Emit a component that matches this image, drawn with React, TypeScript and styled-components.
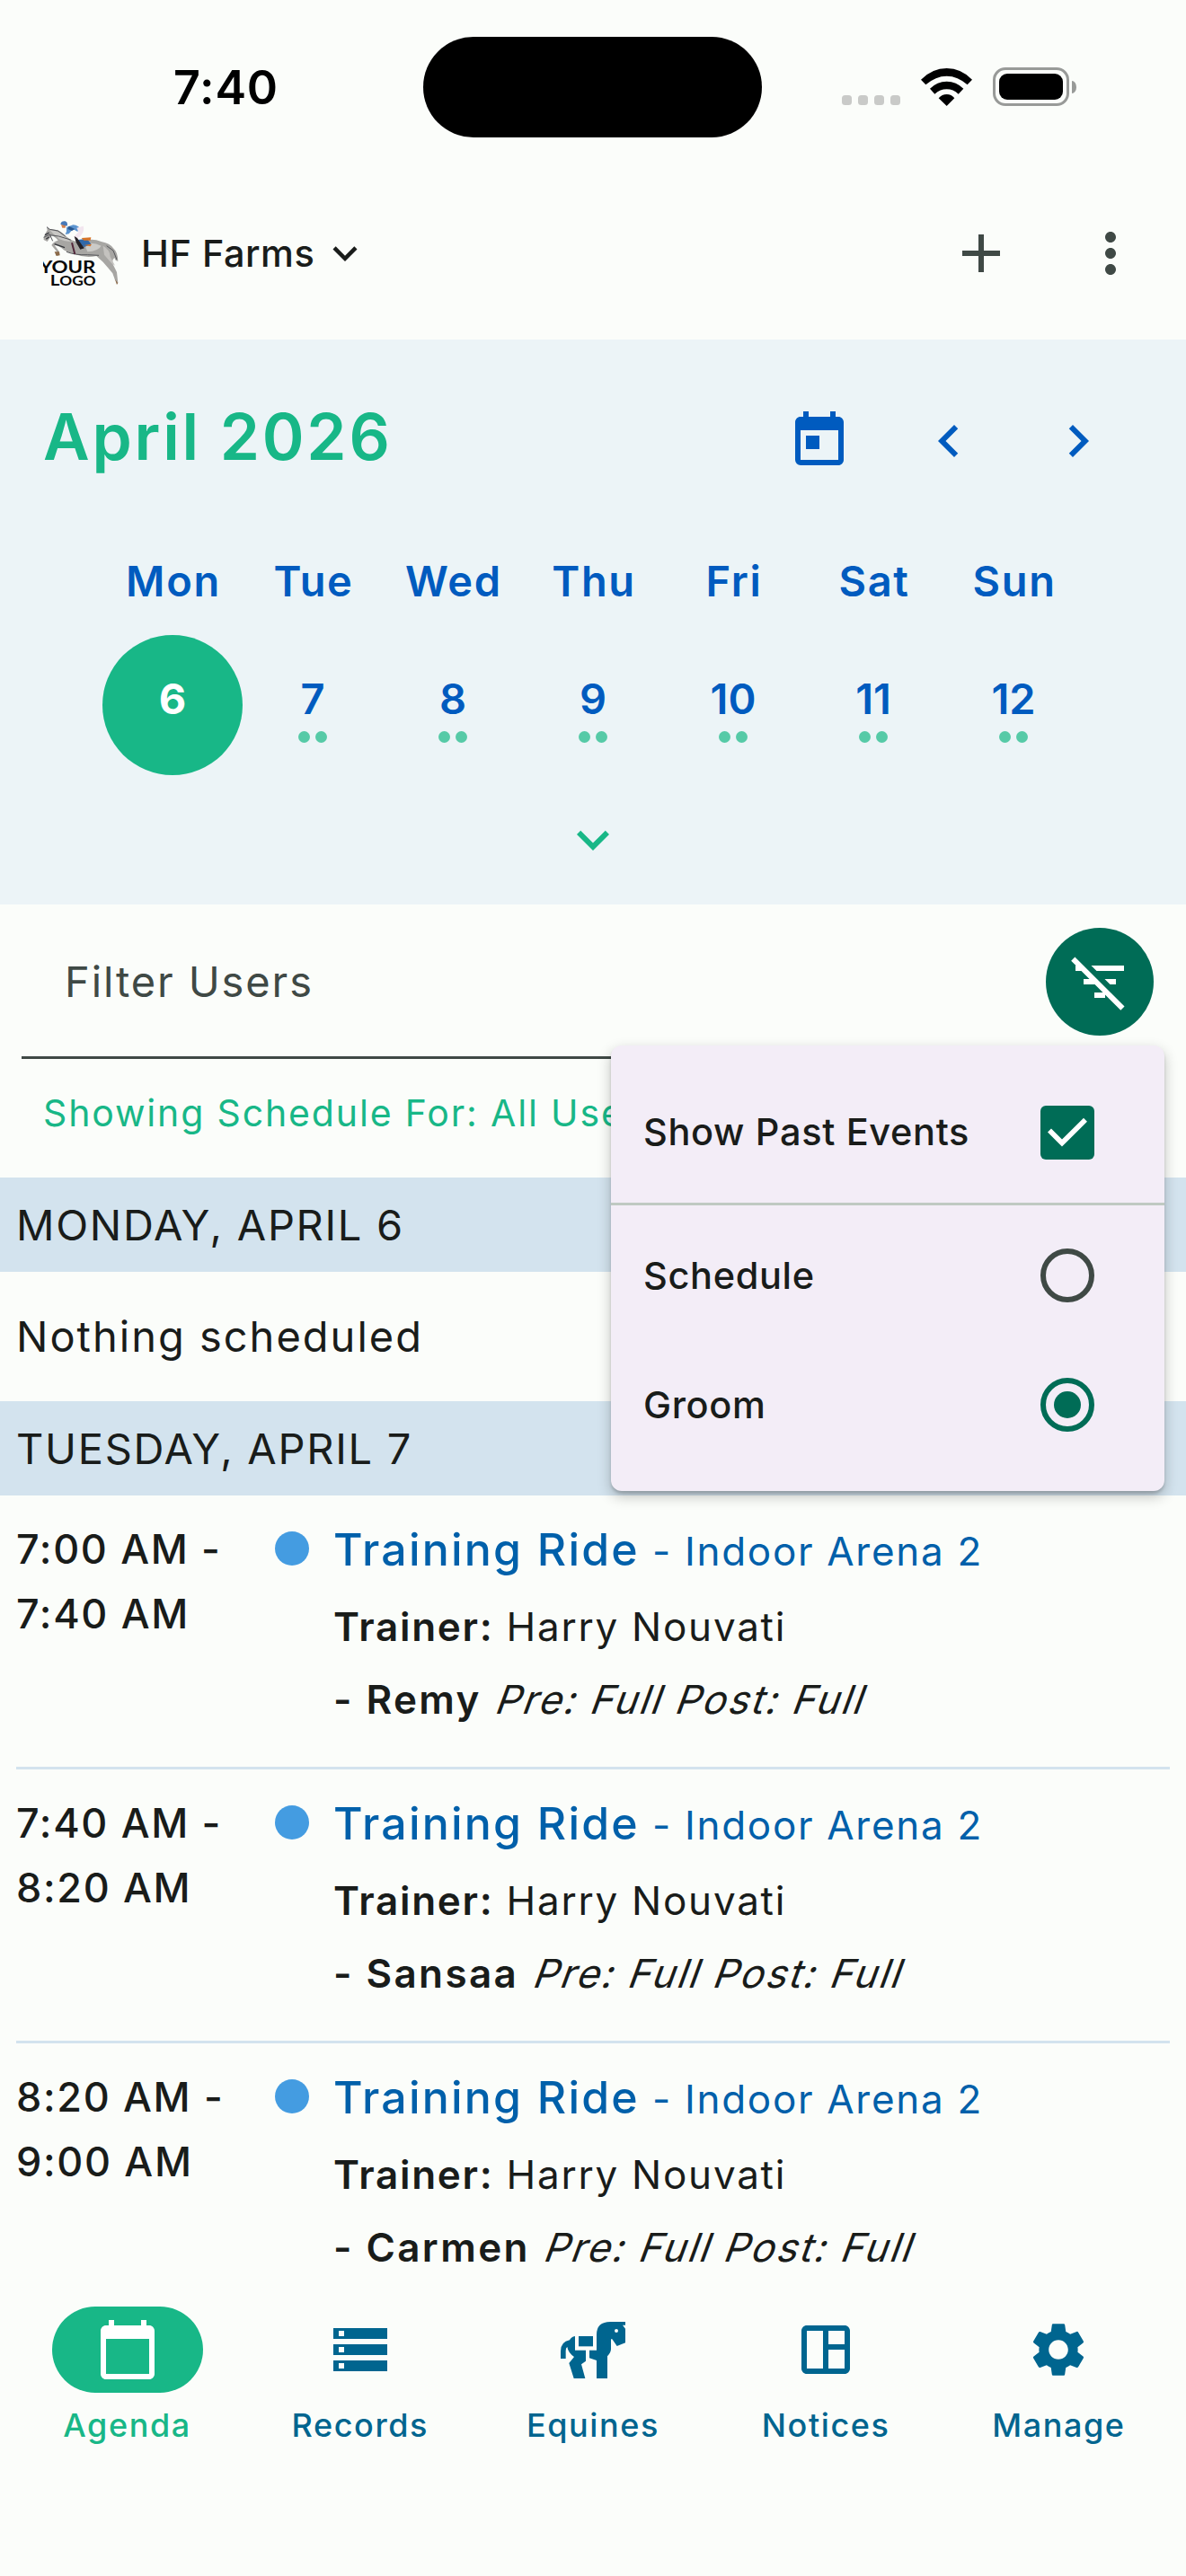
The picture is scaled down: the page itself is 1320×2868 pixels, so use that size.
import React from "react";
import styled, { createGlobalStyle } from "styled-components";
import {
  MdAdd,
  MdCalendarToday,
  MdChevronLeft,
  MdChevronRight,
  MdExpandMore,
  MdMoreVert,
  MdOutlineSpaceDashboard,
  MdSettings,
  MdStorage,
  MdToday,
} from "react-icons/md";

const color = {
  page: "#fbfdfa",
  ink: "#191c1a",
  muted: "#3f4945",
  green: "#18b787",
  teal: "#006c56",
  blue: "#005bbf",
  navBlue: "#00658f",
  eventBlue: "#0060aa",
  calendar: "#ecf4f7",
  band: "#d3e3ee",
  menu: "#f3edf7",
};

const GlobalStyle = createGlobalStyle`
  *, *::before, *::after { box-sizing: border-box; }
  body {
    margin: 0;
    background: ${color.page};
    color: ${color.ink};
    font-family: Inter, Roboto, "Liberation Sans", sans-serif;
    -webkit-font-smoothing: antialiased;
  }
  svg { display: block; flex: none; }
`;

const Screen = styled.div`
  position: relative;
  display: flex;
  flex-direction: column;
  width: 1320px;
  height: 2868px;
  overflow: hidden;
  background: ${color.page};
  white-space: nowrap;
`;

/* ---------- status bar ---------- */

const StatusBar = styled.header`
  display: grid;
  grid-template-columns: 471px 377px 1fr;
  height: 186px;
  padding-top: 41px;
  color: #000;
`;

const Clock = styled.div`
  padding-left: 193px;
  font-size: 52px;
  font-weight: 600;
  line-height: 114px;
  letter-spacing: 0.8px;
`;

const Island = styled.div`
  height: 112px;
  border-radius: 56px;
  background: #000;
`;

const StatusIcons = styled.div`
  display: flex;
  align-items: center;
  height: 111px;
  padding-left: 89px;
`;

const SignalDots = styled.div`
  display: flex;
  gap: 7px;
  margin-top: 30px;
  margin-right: 23px;
`;

const SignalDot = styled.span`
  width: 11px;
  height: 11px;
  border-radius: 3.5px;
  background: #c9cac8;
`;

const Battery = styled.div`
  width: 85px;
  height: 43px;
  margin-left: 23px;
  padding: 4px;
  border: 3px solid #989a98;
  border-radius: 14px;
`;

const BatteryFill = styled.div`
  height: 29px;
  border-radius: 9px;
  background: #000;
`;

const BatteryTip = styled.div`
  width: 5px;
  height: 14px;
  margin-left: 3px;
  border-radius: 0 5px 5px 0 / 0 7px 7px 0;
  background: #989a98;
`;

/* ---------- app bar ---------- */

const AppBar = styled.div`
  display: flex;
  align-items: center;
  height: 192px;
  padding: 0 48px;
`;

const FarmName = styled.div`
  width: 200px;
  margin: 0 0 0 25px;
  font-size: 41.5px;
  font-weight: 500;
  line-height: 60px;
  letter-spacing: 0.5px;
`;

const AppActions = styled.div`
  display: flex;
  gap: 72px;
  margin-left: auto;
  color: ${color.muted};
`;

/* ---------- calendar ---------- */

const Calendar = styled.section`
  height: 629px;
  background: ${color.calendar};
  color: ${color.blue};
`;

const MonthRow = styled.div`
  display: flex;
  align-items: center;
  justify-content: space-between;
  height: 226px;
  padding: 0 84px 0 48px;
`;

const MonthTitle = styled.h1`
  margin: 0 0 10px;
  color: ${color.green};
  font-size: 71px;
  font-weight: 600;
  line-height: 90px;
  letter-spacing: 2.8px;
`;

const MonthActions = styled.div`
  display: flex;
  gap: 72px;
`;

const Week = styled.div`
  display: grid;
  grid-template-columns: repeat(7, 156px);
  justify-content: center;
`;

const WeekdayName = styled.div`
  padding-left: 2px;
  font-size: 47px;
  font-weight: 600;
  line-height: 86px;
  letter-spacing: 1.7px;
  text-align: center;
`;

const DayCell = styled.div<{ $selected?: boolean }>`
  display: flex;
  flex-direction: column;
  align-items: center;
  height: 156px;
  margin-top: 17px;
  padding-top: 41px;
  border-radius: 50%;
  background: ${(p) => (p.$selected ? color.green : "transparent")};
  color: ${(p) => (p.$selected ? "#fff" : color.blue)};
  font-size: 47px;
  font-weight: ${(p) => (p.$selected ? 700 : 600)};
  line-height: 60px;
`;

const DayDots = styled.div`
  display: flex;
  gap: 6px;
  margin-top: 6px;
`;

const DayDot = styled.span`
  width: 13px;
  height: 13px;
  border-radius: 50%;
  background: #56caa7;
`;

const Expand = styled.div`
  display: flex;
  justify-content: center;
  margin-top: 36px;
  color: ${color.green};
`;

/* ---------- filter ---------- */

const FilterRow = styled.div`
  display: flex;
  align-items: center;
  justify-content: space-between;
  height: 172px;
  margin: 0 24px;
  padding: 0 12px 0 48px;
  border-bottom: 3px solid ${color.muted};
`;

const FilterLabel = styled.div`
  margin-top: 3px;
  color: ${color.muted};
  font-size: 47px;
  line-height: 60px;
  letter-spacing: 1.9px;
`;

const FilterButton = styled.button`
  display: flex;
  align-items: center;
  justify-content: center;
  width: 120px;
  height: 120px;
  margin-top: 3px;
  padding: 0;
  border: 0;
  border-radius: 50%;
  background: ${color.teal};
  color: #fff;
`;

const ShowingFor = styled.div`
  height: 132px;
  padding-left: 48px;
  color: ${color.green};
  font-size: 41px;
  line-height: 121px;
  letter-spacing: 1.85px;
`;

/* ---------- schedule ---------- */

const Schedule = styled.main`
  height: 1215px;
  overflow: hidden;
`;

const DateBand = styled.h2`
  height: 105px;
  margin: 0;
  padding-left: 18px;
  background: ${color.band};
  font-size: 47px;
  font-weight: 400;
  line-height: 106px;
  letter-spacing: 1.7px;
`;

const EmptyDay = styled.div`
  height: 144px;
  padding-left: 18px;
  font-size: 47px;
  line-height: 144px;
  letter-spacing: 2px;
`;

const EventRow = styled.article`
  display: grid;
  grid-template-columns: 288px 65px 1fr;
  height: 305px;
  margin: 0 18px;
  border-bottom: 3px solid ${color.band};
`;

const EventTime = styled.div`
  padding-top: 24px;
  font-size: 45px;
  font-weight: 500;
  line-height: 72px;
  letter-spacing: 1.65px;
`;

const EventDot = styled.span`
  width: 38px;
  height: 38px;
  margin: 40px 0 0;
  border-radius: 50%;
  background: #449ce1;
`;

const EventBody = styled.div`
  display: flex;
  flex-direction: column;
`;

const EventLine = styled.div<{ $top: number }>`
  display: flex;
  align-items: baseline;
  height: 60px;
  margin-top: ${(p) => p.$top}px;
  font-size: 44px;
  line-height: 60px;
  letter-spacing: 1.75px;
  white-space: pre;
`;

const EventTitle = styled.span`
  color: ${color.eventBlue};
  font-size: 50px;
  font-weight: 500;
  letter-spacing: 2.2px;
`;

const EventPlace = styled.span`
  color: ${color.eventBlue};
  letter-spacing: 1.7px;
`;

const RoleLabel = styled.span`
  font-weight: 600;
  letter-spacing: 1.7px;
`;

const HorseName = styled.span`
  font-weight: 600;
  letter-spacing: 2.4px;
`;

const Feed = styled.span`
  display: inline-block;
  letter-spacing: 2.15px;
  transform: skewX(-20deg);
  transform-origin: 0 46px;
`;

/* ---------- options menu ---------- */

const Menu = styled.div`
  position: absolute;
  top: 1164px;
  left: 680px;
  width: 616px;
  height: 496px;
  padding: 24px 0;
  border-radius: 12px;
  background: ${color.menu};
  box-shadow: 0 3px 3px rgba(0, 0, 0, 0.14), 0 6px 15px rgba(0, 0, 0, 0.24);
`;

const MenuItem = styled.div`
  display: flex;
  align-items: center;
  justify-content: space-between;
  height: 144px;
  padding: 0 78px 0 36px;
  font-size: 41.5px;
  font-weight: 500;
  line-height: 60px;
  letter-spacing: 0.65px;
`;

const MenuDivider = styled.div`
  height: 3px;
  margin: 7px 0 6px;
  background: #bfc9c2;
`;

const Checkbox = styled.div`
  width: 60px;
  height: 60px;
  margin-top: 2px;
  border-radius: 6px;
  background: ${color.teal};
`;

const Radio = styled.div<{ $on?: boolean }>`
  display: flex;
  align-items: center;
  justify-content: center;
  width: 60px;
  height: 60px;
  border: 6px solid ${(p) => (p.$on ? color.teal : color.muted)};
  border-radius: 50%;
`;

const RadioCore = styled.span`
  width: 30px;
  height: 30px;
  border-radius: 50%;
  background: ${color.teal};
`;

/* ---------- bottom navigation ---------- */

const BottomNav = styled.nav`
  display: grid;
  grid-template-columns: repeat(5, 1fr);
  height: 342px;
  padding: 42px 12px 0;
`;

const NavItem = styled.div<{ $active?: boolean }>`
  display: flex;
  flex-direction: column;
  align-items: center;
  color: ${(p) => (p.$active ? color.green : color.navBlue)};
  font-size: 36px;
  font-weight: 500;
  letter-spacing: 1.6px;
`;

const NavPill = styled.div<{ $active?: boolean }>`
  display: flex;
  align-items: center;
  justify-content: center;
  width: 168px;
  height: 96px;
  border-radius: 48px;
  background: ${(p) => (p.$active ? color.green : "transparent")};
  color: ${(p) => (p.$active ? "#fff" : color.navBlue)};
`;

const NavLabel = styled.span`
  margin-top: 12px;
  line-height: 48px;
`;

/* ---------- drawings ---------- */

const WifiIcon = () => (
  <svg width="57" height="42" viewBox="375 75 171 126">
    <path d="M375 113Q413 75 461 75T546 113L530 130Q498 101 461 101T391 130Z" />
    <path d="M405 143Q429 119 461 119T517 143L500 161Q483 145 461 145T421 161Z" />
    <path d="M434 175Q445 162 461 162T487 175L461 201Z" />
  </svg>
);

const FilterOffIcon = () => (
  <svg width="72" height="72" viewBox="0 0 24 24" fill="currentColor">
    <path d="M10.83 8H21V6H8.83l2 2zm5 5H18v-2h-4.17l2 2zM14 16.83V18h-4v-2h3.17l-3-3H6v-2h2.17l-3-3H3V6h.17L1.39 4.22 2.8 2.81l18.38 18.38-1.41 1.41L14 16.83z" />
  </svg>
);

const HorseIcon = () => (
  <svg width="72" height="63" viewBox="72 99 216 189" fill="currentColor">
    <path
      fillRule="evenodd"
      d="M192 288V228L168 220V194H192V142Q192 99 238 99H288V110H279L288 122V169L260 180L244 157H240V190Q240 202 228 214V288ZM258 123A6 6 0 1 0 258 135A6 6 0 1 0 258 123Z"
    />
    <path d="M132 147H180V181H132Z" />
    <path d="M120 147Q107 149 102 160Q72 166 72 197V222H89V196Q89 186 94 183Q97 202 117 216L100 237L116 288H154L141 241L156 230V194H120Z" />
  </svg>
);

const FarmLogo = () => (
  <svg width="84" height="72" viewBox="12 15 252 216">
    <path
      d="M14 68L20 56L26 46L24 35L34 43Q62 40 84 62Q98 76 122 84L150 82Q176 72 206 84Q236 90 246 106Q262 120 262 150L254 146L250 138Q238 148 248 166L258 186L262 222L252 212L244 190Q230 172 212 152L190 132Q150 140 112 124Q86 118 74 106Q60 96 50 96L66 118L62 130L54 128L58 118L40 96Q46 84 62 80Q50 66 40 64L26 84L14 78Z"
      fill="#a7a6a3"
    />
    <path d="M34 46Q58 46 78 62L104 84Q84 84 66 76L46 58Z" fill="#c9c8c5" />
    <path d="M150 92Q180 84 206 98Q196 116 160 118Z" fill="#cccbc8" />
    <path d="M212 98Q236 112 236 134L252 164L240 156L216 128Z" fill="#c4c2bf" />
    <path
      d="M24 35L34 43L62 48L86 66M14 70L34 60L44 82M34 62L64 66L104 78M90 118Q120 130 160 128L198 130M224 98L246 114L258 144"
      fill="none"
      stroke="#55565a"
      strokeWidth="3"
    />
    <path d="M18 62L32 54M22 76L32 68M50 92L84 104" stroke="#34363b" strokeWidth="4" />
    <path d="M50 118L66 118L68 130L56 132ZM252 210L262 222L258 228Z" fill="#8b6a49" />
    <path d="M128 78L158 74L172 92L150 102L132 96Z" fill="#3268a8" />
    <path d="M140 72L172 70L170 80L148 80ZM148 96L174 92L170 100Z" fill="#d77428" />
    <path d="M108 88L118 126" stroke="#51273a" strokeWidth="6" />
    <path d="M90 36L112 28Q132 30 138 44L126 50L112 42L98 58L86 60L90 50Z" fill="#5c94cf" />
    <path d="M98 32L118 42L108 48L94 42Z" fill="#28578f" />
    <path d="M124 38L146 32Q152 50 134 68L120 76L116 66L130 52Z" fill="#f2e6ef" />
    <path d="M116 66L126 72L142 96L150 106L136 110L122 86Z" fill="#252026" />
    <path d="M72 28L88 26L86 38L76 38Z" fill="#d3804e" />
    <path d="M70 26Q72 14 86 16Q96 20 92 32Z" fill="#4779b8" />
    <g fontFamily="Lato, Inter, sans-serif" fontWeight="700" fill="#080808">
      <text x="0" y="189" fontSize="59" textLength="187" lengthAdjust="spacingAndGlyphs">
        YOUR
      </text>
      <text x="35" y="230" fontSize="44" textLength="153" lengthAdjust="spacingAndGlyphs">
        <tspan fontSize="52">L</tspan>OGO
      </text>
    </g>
  </svg>
);

const CheckMark = () => (
  <svg width="60" height="60" viewBox="0 0 60 60">
    <path d="M10 27.6L24 41.6L50 15.8" fill="none" stroke="#fff" strokeWidth="5.6" />
  </svg>
);

/* ---------- data ---------- */

const days = [
  { name: "Mon", date: 6, selected: true },
  { name: "Tue", date: 7 },
  { name: "Wed", date: 8 },
  { name: "Thu", date: 9 },
  { name: "Fri", date: 10 },
  { name: "Sat", date: 11 },
  { name: "Sun", date: 12 },
];

const events = [
  { start: "7:00 AM -", end: "7:40 AM", horse: "Remy" },
  { start: "7:40 AM -", end: "8:20 AM", horse: "Sansaa" },
  { start: "8:20 AM -", end: "9:00 AM", horse: "Carmen" },
];

const navItems = [
  { label: "Agenda", icon: <MdCalendarToday size={72} />, active: true },
  { label: "Records", icon: <MdStorage size={72} /> },
  { label: "Equines", icon: <HorseIcon /> },
  { label: "Notices", icon: <MdOutlineSpaceDashboard size={72} /> },
  { label: "Manage", icon: <MdSettings size={72} /> },
];

export default function App() {
  return (
    <Screen>
      <GlobalStyle />
      <StatusBar>
        <Clock>7:40</Clock>
        <Island />
        <StatusIcons>
          <SignalDots>
            <SignalDot />
            <SignalDot />
            <SignalDot />
            <SignalDot />
          </SignalDots>
          <WifiIcon />
          <Battery>
            <BatteryFill />
          </Battery>
          <BatteryTip />
        </StatusIcons>
      </StatusBar>

      <AppBar>
        <FarmLogo />
        <FarmName>HF Farms</FarmName>
        <MdExpandMore size={54} />
        <AppActions>
          <MdAdd size={72} />
          <MdMoreVert size={72} />
        </AppActions>
      </AppBar>

      <Calendar>
        <MonthRow>
          <MonthTitle>April 2026</MonthTitle>
          <MonthActions>
            <MdToday size={72} />
            <MdChevronLeft size={72} />
            <MdChevronRight size={72} />
          </MonthActions>
        </MonthRow>
        <Week>
          {days.map((d) => (
            <WeekdayName key={d.name}>{d.name}</WeekdayName>
          ))}
        </Week>
        <Week>
          {days.map((d) => (
            <DayCell key={d.date} $selected={d.selected}>
              {d.date}
              {!d.selected && (
                <DayDots>
                  <DayDot />
                  <DayDot />
                </DayDots>
              )}
            </DayCell>
          ))}
        </Week>
        <Expand>
          <MdExpandMore size={72} />
        </Expand>
      </Calendar>

      <FilterRow>
        <FilterLabel>Filter Users</FilterLabel>
        <FilterButton aria-label="Filter options">
          <FilterOffIcon />
        </FilterButton>
      </FilterRow>
      <ShowingFor>Showing Schedule For: All Users</ShowingFor>

      <Schedule>
        <DateBand>MONDAY, APRIL 6</DateBand>
        <EmptyDay>Nothing scheduled</EmptyDay>
        <DateBand>TUESDAY, APRIL 7</DateBand>
        {events.map((e) => (
          <EventRow key={e.horse}>
            <EventTime>
              {e.start}
              <br />
              {e.end}
            </EventTime>
            <EventDot />
            <EventBody>
              <EventLine $top={30}>
                <EventTitle>Training Ride</EventTitle>
                <EventPlace> - Indoor Arena 2</EventPlace>
              </EventLine>
              <EventLine $top={26}>
                <RoleLabel>Trainer:</RoleLabel>
                <span> Harry Nouvati</span>
              </EventLine>
              <EventLine $top={21}>
                <HorseName>- {e.horse} </HorseName>
                <Feed>Pre: Full Post: Full</Feed>
              </EventLine>
            </EventBody>
          </EventRow>
        ))}
      </Schedule>

      <BottomNav>
        {navItems.map((n) => (
          <NavItem key={n.label} $active={n.active}>
            <NavPill $active={n.active}>{n.icon}</NavPill>
            <NavLabel>{n.label}</NavLabel>
          </NavItem>
        ))}
      </BottomNav>

      <Menu>
        <MenuItem>
          Show Past Events
          <Checkbox>
            <CheckMark />
          </Checkbox>
        </MenuItem>
        <MenuDivider />
        <MenuItem>
          Schedule
          <Radio />
        </MenuItem>
        <MenuItem>
          Groom
          <Radio $on>
            <RadioCore />
          </Radio>
        </MenuItem>
      </Menu>
    </Screen>
  );
}
